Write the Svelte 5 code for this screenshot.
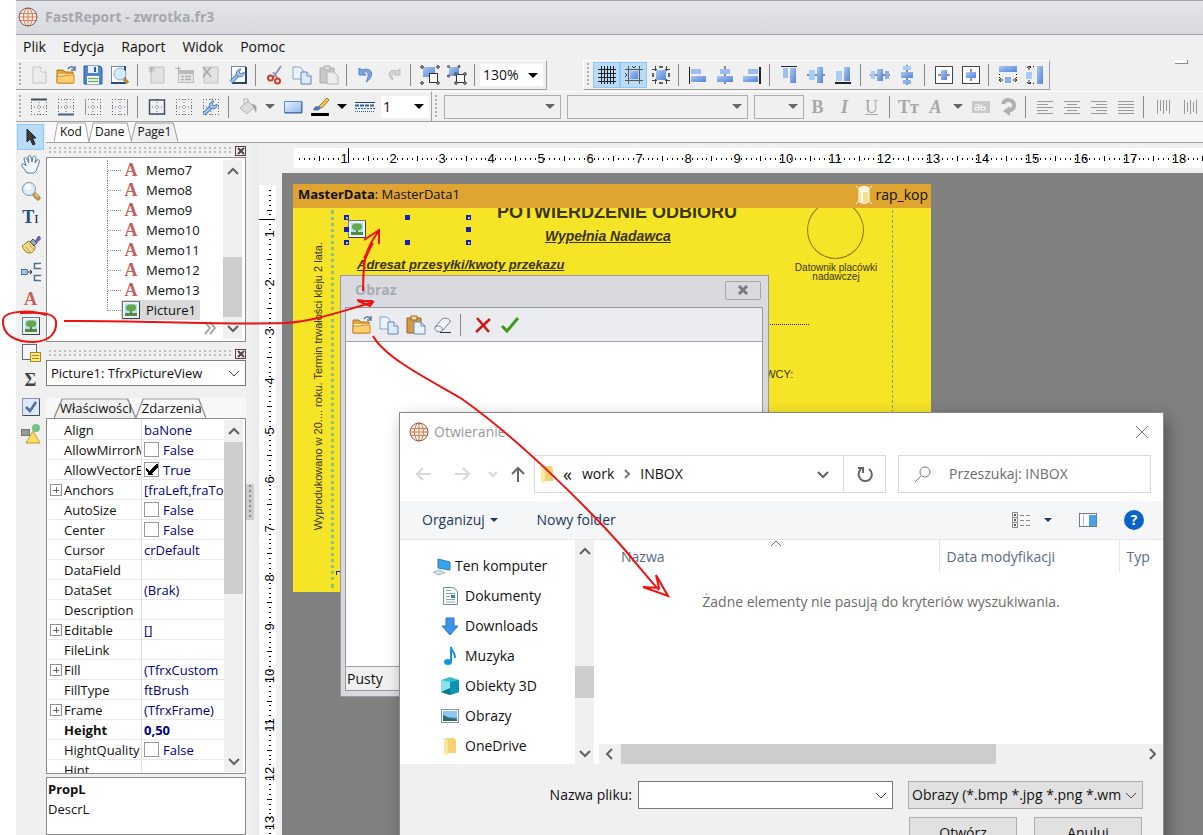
<script lang="ts">
	type Prop = { name: string; value?: string; check?: boolean; expand?: boolean; bold?: boolean };

	let query = $state('');
	let fileName = $state('');
	let activeTool = $state('cursor');

	const menu = ['Plik', 'Edycja', 'Raport', 'Widok', 'Pomoc'];

	// '|' is a separator, 'arrow' is a narrow drop-down button
	const fileBar = [
		'new', 'open', 'save', 'preview', '|', 'newPage', 'newDialog', 'deletePage', 'settings', '|',
		'cut', 'copy', 'paste', '|', 'undo', 'redo', '|', 'group', 'ungroup', '|'
	];
	const alignBar = [
		'grid', 'snap', 'fit', '|', 'alLeft', 'alCenter', 'alRight', '|', 'alTop', 'alMiddle', 'alBottom', '|',
		'spaceH', 'spaceV', '|', 'centerH', 'centerV', '|', 'sameW', 'sameH'
	];
	const frameBar = ['frTop', 'frBottom', 'frLeft', 'frRight', '|', 'frAll', 'frNone', 'frEdit', '|', 'fill', 'arrow', 'rect', 'brush', 'arrowDark', 'lines'];
	const textBar = [
		'bold', 'italic', 'underline', '|', 'font', 'fontColor', 'arrow', 'highlight', 'rotate', '|',
		'txLeft', 'txCenter', 'txRight', 'txJustify', '|', 'vTop', 'vMiddle'
	];
	const pressed = ['grid', 'snap'];
	const toolbox = ['cursor', 'hand', 'zoom', 'textTool', 'format', 'connect', 'memo', 'picture', 'subreport', 'sum', 'checkTool', 'shapes'];

	const tree = ['Memo7', 'Memo8', 'Memo9', 'Memo10', 'Memo11', 'Memo12', 'Memo13', 'Picture1'];

	const props: Prop[] = [
		{ name: 'Align', value: 'baNone' },
		{ name: 'AllowMirrorMode', check: false },
		{ name: 'AllowVectorExport', check: true },
		{ name: 'Anchors', value: '[fraLeft,fraTop]', expand: true },
		{ name: 'AutoSize', check: false },
		{ name: 'Center', check: false },
		{ name: 'Cursor', value: 'crDefault' },
		{ name: 'DataField' },
		{ name: 'DataSet', value: '(Brak)' },
		{ name: 'Description' },
		{ name: 'Editable', value: '[]', expand: true },
		{ name: 'FileLink' },
		{ name: 'Fill', value: '(TfrxCustom', expand: true },
		{ name: 'FillType', value: 'ftBrush' },
		{ name: 'Frame', value: '(TfrxFrame)', expand: true },
		{ name: 'Height', value: '0,50', bold: true },
		{ name: 'HightQuality', check: false },
		{ name: 'Hint' }
	];

	const places = [
		{ name: 'Ten komputer', icon: 'computer', root: true },
		{ name: 'Dokumenty', icon: 'docs' },
		{ name: 'Downloads', icon: 'down' },
		{ name: 'Muzyka', icon: 'music' },
		{ name: 'Obiekty 3D', icon: 'cube' },
		{ name: 'Obrazy', icon: 'images' },
		{ name: 'OneDrive', icon: 'folder' }
	];

	// one centimetre on the rulers at 130% zoom
	const CM = 49.1;
	const ticks = Array.from({ length: 190 }, (_, i) => i + 1);

	const dots = '<path d="M2 2.500H18M2 17.500H18M2.500 2V18M17.500 2V18M10 2V18M2 10H18" stroke="#666" stroke-dasharray="1 2"/>';
	const page = (c: string) => `<path d="M4 2H12L17 7V18H4Z" fill="${c}" stroke="#c4c4c4"/><path d="M12 2V7H17" fill="#fff" stroke="#c4c4c4"/>`;
	const wrench = '<path d="M3 17L10 10" stroke="#5580b8" stroke-width="4"/><path d="M3 17L10 10" stroke="#a5c8ef" stroke-width="2"/><path d="M9 11C7 7 10 4 13 4L11 7L13 9L16 7C17 11 13 13 9 11" fill="#9cc0ea" stroke="#5580b8"/>';
	const folderOpen = '<path d="M1 5H7L9 7H17V18H1Z" fill="#e3a23a" stroke="#b87414"/><path d="M2 9H17V12H2Z" fill="#fff3cf"/><path d="M1 11H8L10 10H18V18H1Z" fill="#ffcf70" stroke="#d08a20"/><path d="M12 4C14 1 17 1 18 4M19 1V5H15" fill="none" stroke="#54789f" stroke-width="1.500"/>';
	const copyPages = '<path d="M1 2H8L11 5V14H1Z" fill="#eaf3ff" stroke="#8ba3c4"/><path d="M9 7H15L19 11V19H9Z" fill="#dcebff" stroke="#6484b4"/><path d="M15 7V11H19" fill="#fff" stroke="#6484b4"/>';
	const photo = '<rect x="1.500" y="1.500" width="17" height="17" fill="#eef2f4" stroke="#6b7a86"/><path d="M2 18.500H18.500V2" fill="none" stroke="#39434d"/><rect x="4" y="4" width="12" height="12" fill="#b5def0"/><path d="M4 16V13H16V16Z" fill="#4a8f42"/><path d="M9 10H11V15H9Z" fill="#6d7440"/><path d="M5 9C4 6 7 4 10 4.500C14 4 16 6 15 9C14 12 6 12 5 9" fill="#62ab4c"/>';
	const globe = '<circle cx="10" cy="10" r="8.500" fill="#fbeee8"/><g fill="none" stroke="#d97b55"><path d="M2 6.500H18M1 10H19M2 13.500H18M10 1V19"/><ellipse cx="10" cy="10" rx="4.500" ry="9"/></g><circle cx="10" cy="10" r="9" fill="none" stroke="#77635f"/>';
	const textLines = (xs: number[][]) => `<path d="${xs.map(([a, b], i) => `M${a} ${4.5 + i * 3}H${b}`).join('')}" stroke="#999"/>`;
	const glass = '<circle cx="8" cy="8" r="6.500" fill="#dcecfb" stroke="#8094a8"/><circle cx="7" cy="6" r="3" fill="#fff"/><path d="M14 14L17 17" stroke="#b8924a" stroke-width="5" stroke-linecap="round"/><path d="M14 13L17 16" stroke="#f0d28a" stroke-width="1.500"/>';

	const icons: Record<string, string> = {
		globe,
		new: page('#ececec'),
		open: folderOpen,
		save: '<path d="M1 1H17L19 3V19H1Z" fill="#4f86cf" stroke="#2c5a9b"/><rect x="5" y="1" width="10" height="7" fill="#e9f1fb"/><rect x="11" y="2" width="2" height="5" fill="#2c5a9b"/><rect x="4" y="11" width="12" height="8" fill="#fff"/><path d="M5 13.500H15M5 16.500H15" stroke="#6dae5f" stroke-width="1.500"/>',
		preview: '<rect x="1.500" y="1.500" width="14" height="16" fill="#fff" stroke="#6c88ad"/><path d="M1 18H15V1" fill="none" stroke="#2d4e7e" stroke-width="2"/><circle cx="10" cy="9" r="6" fill="#d5eafb" stroke="#8faccc"/><path d="M14 14L18 18" stroke="#c28a38" stroke-width="3.500"/>',
		newPage: '<path d="M4 2H17V18H4Z" fill="#e2e2e2" stroke="#c0c0c0"/><path d="M1 4H8M4.500 1V8M2 1.500L7 7M7 1.500L2 7" stroke="#b4b4b4"/>',
		newDialog: '<rect x="4.500" y="5.500" width="15" height="12" fill="#e6e6e6" stroke="#bbb"/><path d="M5 7.500H19" stroke="#bbb" stroke-width="3"/><path d="M7 11.500H10M7 14.500H10M11 11.500H17M11 14.500H17" stroke="#b0b0b0" stroke-width="1.500"/><path d="M1 3.500H7M4.500 1V7" stroke="#b4b4b4"/>',
		deletePage: '<path d="M3 2H17V18H3Z" fill="#e2e2e2" stroke="#c0c0c0"/><path d="M2 2L10 12M10 2L2 12" stroke="#a5a5a5" stroke-width="1.500"/>',
		settings: `<rect x="3.500" y="1.500" width="14" height="16" fill="#fff" stroke="#6c88ad"/><path d="M4 18H18V2" fill="none" stroke="#24456f" stroke-width="2"/>${wrench}`,
		cut: '<path d="M16 1L8 13M8 7L13 14" stroke="#8296b5" stroke-width="1.800"/><g fill="none" stroke="#cf3b2e" stroke-width="2"><circle cx="5.500" cy="13" r="2.500"/><circle cx="12.500" cy="16" r="2.500"/></g>',
		copy: copyPages,
		paste: '<path d="M1 3H15V18H1Z" fill="#c9c9c9" stroke="#aaa"/><path d="M5 1H11V5H5Z" fill="#ddd" stroke="#aaa"/><path d="M8 7H15L19 11V19H8Z" fill="#ececec" stroke="#b5b5b5"/>',
		undo: '<path d="M3 3V10H10L7.500 7.500C12 5 14 10 10 17C18 13 18 1 6 5Z" fill="#7ea6e6" stroke="#5580c8"/>',
		redo: '<path d="M17 4V10H11L13 8C9 7 8 10 10 15C4 12 5 3 14 6Z" fill="#d6d6d6" stroke="#bcbcbc"/>',
		group: '<rect x="3" y="2" width="12" height="10" fill="url(#blue)"/><rect x="9.500" y="8.500" width="8" height="9" fill="#fff" stroke="#333"/><g fill="#ccc" stroke="#333"><circle cx="2" cy="2" r="1.300"/><circle cx="18" cy="2" r="1.300"/><circle cx="2" cy="18" r="1.300"/><circle cx="18" cy="18" r="1.300"/></g>',
		ungroup: '<rect x="2" y="2" width="10" height="9" fill="url(#blue)"/><rect x="9.500" y="9.500" width="8" height="8" fill="#fff" stroke="#333"/><g fill="#ccc" stroke="#333"><circle cx="1.500" cy="1.500" r="1"/><circle cx="12" cy="1.500" r="1"/><circle cx="1.500" cy="11" r="1"/><circle cx="9" cy="9" r="1.300"/><circle cx="18" cy="9" r="1.300"/><circle cx="9" cy="18" r="1.300"/><circle cx="18" cy="18" r="1.300"/></g>',
		grid: '<path d="M4.500 1V19M7.500 1V19M10.500 1V19M13.500 1V19M16.500 1V19M1 4.500H19M1 8.500H19M1 12.500H19M1 16.500H19" stroke="#222"/>',
		snap: '<rect x="6" y="6" width="8" height="8" fill="url(#blue)"/><path d="M4.500 1V19M15.500 1V19M1 4.500H19M1 15.500H19" stroke="#555"/><path d="M1 8L3 10L1 12M8 1L10 3L12 1" fill="none" stroke="#333"/>',
		fit: '<rect x="5" y="5" width="10" height="10" fill="url(#blue)"/><path d="M4.500 1V19M15.500 1V19M1 4.500H19M1 15.500H19" stroke="#444" stroke-dasharray="5 8 5"/><path d="M8 2H12M8 18H12M2 8V12M18 8V12" stroke="#333" stroke-width="1.500"/>',
		alLeft: '<path d="M1.500 2V19" stroke="#222"/><rect x="3" y="4" width="10" height="5" fill="#9dbcf0"/><rect x="3" y="11" width="15" height="6" fill="url(#blue)"/>',
		alCenter: '<path d="M10 1V19" stroke="#222"/><rect x="5" y="4" width="10" height="5" fill="#9dbcf0"/><rect x="2" y="11" width="16" height="6" fill="url(#blue)"/>',
		alRight: '<path d="M18 2V19" stroke="#222" stroke-width="2"/><rect x="6" y="4" width="10" height="5" fill="#9dbcf0"/><rect x="1" y="11" width="15" height="6" fill="url(#blue)"/>',
		alTop: '<path d="M2 1.500H18" stroke="#222"/><rect x="4" y="3" width="5" height="10" fill="#9dc0f2"/><rect x="11" y="3" width="6" height="15" fill="url(#blue)"/>',
		alMiddle: '<path d="M1 10H19" stroke="#222"/><rect x="3" y="5" width="6" height="10" fill="#a6ccf8"/><rect x="11" y="2" width="6" height="16" fill="url(#blue)"/>',
		alBottom: '<path d="M2 18H18" stroke="#222" stroke-width="2"/><rect x="3" y="6" width="6" height="10" fill="#a6ccf8"/><rect x="11" y="2" width="6" height="14" fill="url(#blue)"/>',
		spaceH: '<path d="M0 10H20" stroke="#222"/><rect x="1" y="6" width="4" height="8" fill="#a6ccf8"/><rect x="7" y="4" width="6" height="12" fill="url(#blue)"/><rect x="15" y="6" width="4" height="8" fill="#8cb0ee"/>',
		spaceV: '<path d="M10 0V20" stroke="#222"/><rect x="6" y="1" width="8" height="4" fill="#a6ccf8"/><rect x="4" y="7" width="12" height="6" fill="url(#blue)"/><rect x="6" y="15" width="8" height="4" fill="#8cb0ee"/>',
		centerH: '<rect x="1.500" y="1.500" width="17" height="17" fill="#fff" stroke="#444"/><path d="M4 10H16" stroke="#222"/><rect x="7" y="5" width="6" height="10" fill="url(#blue)"/>',
		centerV: '<rect x="1.500" y="1.500" width="17" height="17" fill="#fff" stroke="#444"/><path d="M10 4V16" stroke="#222"/><rect x="5" y="7" width="10" height="6" fill="url(#blue)"/>',
		sameW: '<rect x="1" y="1" width="18" height="6" fill="url(#blue)"/><path d="M1.500 9V14M18.500 9V14" stroke="#222" stroke-dasharray="1 2"/><rect x="7" y="12" width="6" height="6" fill="#8cb0ee"/><path d="M5 15H1M3 13L1 15L3 17M15 15H19M17 13L19 15L17 17" fill="none" stroke="#333"/>',
		sameH: '<rect x="12" y="1" width="6" height="18" fill="url(#blue)"/><path d="M5 1.500H11M5 18.500H11" stroke="#222" stroke-dasharray="1 2"/><rect x="1" y="7" width="6" height="7" fill="#a6ccf8"/><path d="M4 5V1M2 3L4 1L6 3M4 15V19M2 17L4 19L6 17" fill="none" stroke="#333"/>',
		frTop: `${dots}<path d="M2 2.500H18" stroke="#444c60" stroke-width="2"/>`,
		frBottom: `${dots}<path d="M2 17.500H18" stroke="#42648c" stroke-width="2"/>`,
		frLeft: `${dots}<path d="M2.500 2V18" stroke="#8399b5"/>`,
		frRight: `${dots}<path d="M17.500 2V18" stroke="#8399b5"/>`,
		frAll: `${dots}<rect x="2.500" y="3" width="15" height="14" fill="none" stroke="#42546c" stroke-width="1.500"/>`,
		frNone: dots,
		frEdit: dots + wrench,
		fill: '<path d="M2 11L10 4L16 10L9 17Z" fill="#dcdcdc" stroke="#b4b4b4"/><path d="M6 8V2H10V6" fill="none" stroke="#b4b4b4"/><path d="M14 7C19 7 19 11 18 16L15 10" fill="#a5a5a5"/>',
		rect: '<rect x="1.500" y="4.500" width="17" height="11" fill="url(#soft)" stroke="#5f88bd"/><path d="M2 16H19V5" fill="none" stroke="#39679f"/>',
		brush: '<path d="M9 9L17 1L19 3L12 11Z" fill="#f3c354" stroke="#a87b22"/><path d="M3 13C5 8 8 8 11 11C9 14 6 14 3 13" fill="#4d77b5"/><rect x="1" y="16" width="18" height="3" fill="#000"/>',
		lines: '<path d="M0 5.500H20" stroke="#245"/><path d="M0 8.500H20" stroke="#2e5fa8" stroke-width="2" stroke-dasharray="4 1"/><path d="M0 11.500H20" stroke="#2e5fa8" stroke-dasharray="2 1"/><path d="M0 14.500H20" stroke="#2e5fa8" stroke-dasharray="1 1"/>',
		highlight: '<rect x="1" y="4" width="18" height="12" fill="#c9c9c9"/><path d="M4 8H8V13H4V10.500H8M10 7V13H14V10H10" fill="none" stroke="#fff"/>',
		rotate: '<path d="M5 7C6 1 17 2 16 9C16 12 14 13 10 14" fill="none" stroke="#b0b0b0" stroke-width="4"/><path d="M12 9V19L5 14Z" fill="#b0b0b0"/>',
		txLeft: textLines([[2, 18], [2, 13], [2, 18], [2, 13], [2, 18]]),
		txCenter: textLines([[2, 18], [5, 15], [2, 18], [5, 15], [2, 18]]),
		txRight: textLines([[2, 18], [7, 18], [2, 18], [7, 18], [2, 18]]),
		txJustify: textLines([[2, 18], [2, 18], [2, 18], [2, 18], [2, 18]]),
		vTop: '<path d="M4.500 3V17M7.500 3V14M10.500 3V17M13.500 3V14M16.500 3V17" stroke="#999"/>',
		vMiddle: '<path d="M4.500 3V17M7.500 5V15M10.500 3V17M13.500 5V15M16.500 3V17" stroke="#999"/>',
		cursor: '<path d="M6 2V15L9 12L12 18L14 17L11.500 11H15Z" fill="#3b3b3b" stroke="#222"/>',
		hand: '<path d="M6 19L1 12C0 9 3 9 5 12L3 5C3 3 5 3 6 5L8 9L7 3C7 1 10 1 10 3L11 8L12 3C13 1 15 2 15 4L14 9L16 6C18 5 19 6 18 9L15 17L13 19Z" fill="#f4f8ff" stroke="#5b779b"/>',
		zoom: glass,
		format: '<path d="M1 11C4 10 5 7 8 6L14 11C14 15 12 18 8 18C5 18 3 15 1 11Z" fill="#f0dc8a" stroke="#8c7a2b"/><path d="M5 12L9 17M8 9L12 14" stroke="#c0a040"/><path d="M9 7L12 4L16 8L13 11Z" fill="#9aa6b8" stroke="#556"/><path d="M14 6L17 1H19L20 4L16 8Z" fill="#6b62b4"/>',
		connect: '<rect x="0.500" y="7.500" width="6" height="5" fill="#a8c4e4" stroke="#56779f"/><path d="M7 10H11M9 8L11 10L9 12" fill="none" stroke="#222"/><path d="M20 1.500H13.500V6.500H20M20 13.500H13.500V18.500H20" fill="#fff" stroke="#4b6d98" stroke-width="1.500"/>',
		picture: photo,
		subreport: '<rect x="1.500" y="1.500" width="14" height="15" fill="#f4f6f9" stroke="#5f6b7d"/><rect x="9.500" y="9.500" width="10" height="9" fill="#ffe97f" stroke="#a88a1c"/><path d="M11 12.500H18M11 15.500H18" stroke="#a88a1c"/>',
		checkTool: '<rect x="1.500" y="1.500" width="17" height="17" fill="#dce8f8" stroke="#8a95a4"/><path d="M2 18.500H18.500V2" fill="none" stroke="#444c58"/><path d="M5 10L9 14L15 5" fill="none" stroke="#4f6f9f" stroke-width="2.500"/>',
		shapes: '<rect x="0.500" y="5.500" width="8" height="6" fill="#999" stroke="#777"/><circle cx="15" cy="4" r="4" fill="#6fc383"/><path d="M12 7L19 19H5Z" fill="#ffdb68" stroke="#c99a24"/>',
		pasteColor: '<path d="M1 3H15V18H1Z" fill="#d49a4c" stroke="#966020"/><path d="M5 1H11V5H5Z" fill="#f0dca0" stroke="#966020"/><path d="M8 7H15L19 11V19H8Z" fill="#eaf2fd" stroke="#7088aa"/><path d="M15 7V11H19" fill="none" stroke="#7088aa"/>',
		eraser: '<path d="M2 12L9 4C12 2 18 4 17 7L9 16C6 18 1 16 2 12Z" fill="#f5f8fc" stroke="#6c7c92"/><path d="M2 12C5 10 9 11 10 15" fill="none" stroke="#6c7c92"/><path d="M7 17.500H18" stroke="#334"/>',
		cancel: '<path d="M4 3L16 17M17 4L3 17" stroke="#cf1515" stroke-width="2.500"/>',
		ok: '<path d="M2 11L7 16L18 3" fill="none" stroke="#3f9a1f" stroke-width="3"/>',
		database: '<path d="M5 4V16C5 19 15 19 15 16V4" fill="#f7dc8c" stroke="#fff"/><path d="M8 7V17" stroke="#fff" stroke-width="2"/><ellipse cx="10" cy="4" rx="5" ry="2.500" fill="#fff3c8" stroke="#fff"/><path d="M2 1L5 4M18 1L15 4M2 19L5 16M18 19L15 16" stroke="#fff"/>',
		computer: '<path d="M6 3L18 6V14L6 12Z" fill="#37a5ee" stroke="#2b7cc0"/><path d="M1 16L8 14L13 17L6 19Z" fill="#d4dee6" stroke="#a9bac8"/>',
		docs: '<path d="M3.500 1.500H13L17.500 5V18.500H3.500Z" fill="#fff" stroke="#7d8890"/><path d="M6 4.500H11M6 7.500H15M6 10.500H10M6 13.500H15M6 16H15" stroke="#7ba7c4"/><rect x="11" y="9" width="4" height="3" fill="#3187bd"/>',
		down: '<path d="M6 2H14V10H18L10 19L2 10H6Z" fill="#3c94e6" stroke="#2a77c4"/>',
		music: '<ellipse cx="8" cy="16" rx="4" ry="3" fill="#1593dc"/><path d="M11 16V1C11 6 16 6 15 12" fill="none" stroke="#1593dc" stroke-width="2"/>',
		cube: '<path d="M1 4L10 1L19 4V16L10 19L1 16Z" fill="#39bdd4"/><path d="M1 4L10 6V19L1 16Z" fill="#8be3ea"/><path d="M10 6L19 4V16L10 19Z" fill="#0f93b5"/><path d="M1 16L10 12V19Z" fill="#0d7590"/>',
		images: '<rect x="1.500" y="3.500" width="17" height="13" fill="#fff" stroke="#8b959e"/><rect x="3" y="5" width="14" height="10" fill="#8ec9f5"/><path d="M3 9L10 12L17 13V15H3Z" fill="#2d6b5e"/><path d="M3 12H17" stroke="#3c78a8"/>',
		folder: '<path d="M4 2H14L16 4V17H6L4 18Z" fill="#f6d273"/><path d="M4 2L8 4V19L4 18Z" fill="#ffe7a0"/>'
	};

	const letters: Record<string, [string, string]> = {
		bold: ['B', 'l-bold'],
		italic: ['I', 'l-bold l-italic'],
		underline: ['U', 'l-under'],
		font: ['Tт', 'l-bold'],
		fontColor: ['A', 'l-bold l-italic'],
		textTool: ['T', 'l-navy'],
		memo: ['A', 'l-red'],
		sum: ['Σ', 'l-dark']
	};
</script>

{#snippet icon(name: string)}
	{#if letters[name]}
		<span class="letter {letters[name][1]}">{letters[name][0]}{#if name === 'textTool'}<small>I</small>{/if}</span>
	{:else}
		<svg class="icon" viewBox="0 0 20 20" fill="none" aria-hidden="true">{@html icons[name]}</svg>
	{/if}
{/snippet}

{#snippet chevron(d: string)}
	<svg class="chevron" viewBox="0 0 12 12" aria-hidden="true"><path {d} /></svg>
{/snippet}

{#snippet tools(items: string[])}
	{#each items as item}
		{#if item === '|'}
			<span class="sep"></span>
		{:else if item === 'arrow' || item === 'arrowDark'}
			<button class="tool narrow" class:dark={item === 'arrowDark'} aria-label="Rozwiń"><i class="tri"></i></button>
		{:else}
			<button class="tool" class:on={pressed.includes(item)} aria-label={item}>{@render icon(item)}</button>
		{/if}
	{/each}
{/snippet}

{#snippet tab(label: string, active: boolean)}
	<button class="tab" class:active>
		<svg viewBox="0 0 50 20" preserveAspectRatio="none" aria-hidden="true"><path d="M0 20L5 1H45L50 20" /></svg>
		<span>{label}</span>
	</button>
{/snippet}

{#snippet ruler(vertical: boolean)}
	<svg class="scale" aria-hidden="true">
		<g transform={vertical ? 'rotate(-90) scale(-1 1)' : ''}>
			{#each ticks as t}
				{#if t % 10 === 5}
					<rect x={Math.round((t * CM) / 10)} y="8" width="1" height="5" />
				{:else if t % 10 !== 0}
					<rect x={Math.round((t * CM) / 10)} y="10" width="1" height="2" />
				{/if}
			{/each}
		</g>
		{#each ticks.filter((t) => t % 10 === 0) as t}
			{#if vertical}
				<text transform="translate(15 {Math.round((t * CM) / 10)}) rotate(-90)">{t / 10}</text>
			{:else}
				<text x={Math.round((t * CM) / 10) + 1} y="15">{t / 10}</text>
			{/if}
		{/each}
	</svg>
{/snippet}

<svg class="defs" aria-hidden="true">
	<defs>
		<linearGradient id="blue" x1="0" y1="0" x2="1" y2="1">
			<stop offset="0" stop-color="#a9c8f4" /><stop offset="1" stop-color="#5583d8" />
		</linearGradient>
		<linearGradient id="soft" x1="0" y1="0" x2="1" y2="1">
			<stop offset="0" stop-color="#eaf3ff" /><stop offset="1" stop-color="#8fb8ee" />
		</linearGradient>
	</defs>
</svg>

<div class="app">
	<header class="title">{@render icon('globe')}<span>FastReport - zwrotka.fr3</span></header>

	<nav class="menu">
		{#each menu as item}<button>{item}</button>{/each}
		<button class="mdi" aria-label="Minimalizuj"></button>
	</nav>

	<div class="bars">
		<div class="bar">
			<i class="grip"></i>
			{@render tools(fileBar)}
			<label class="combo zoom">
				<select aria-label="Powiększenie"><option>130%</option></select><i class="tri"></i>
			</label>
		</div>
		<div class="bar second">
			<i class="grip"></i>
			{@render tools(alignBar)}
		</div>
	</div>

	<div class="bars lower">
		<div class="bar">
			<i class="grip"></i>
			{@render tools(frameBar)}
			<label class="combo thick">
				<select aria-label="Grubość linii"><option>1</option></select><i class="tri"></i>
			</label>
		</div>
		<div class="bar text">
			<i class="grip"></i>
			<label class="combo off style"><select disabled aria-label="Styl"></select><i class="tri"></i></label>
			<label class="combo off face"><select disabled aria-label="Czcionka"></select><i class="tri"></i></label>
			<label class="combo off size"><select disabled aria-label="Rozmiar"></select><i class="tri"></i></label>
			{@render tools(textBar)}
		</div>
	</div>

	<div class="main">
		<div class="toolbox">
			{#each toolbox as item}
				<button class="tool" class:on={activeTool === item} aria-label={item} onclick={() => (activeTool = item)}>
					{@render icon(item)}
				</button>
			{/each}
		</div>

		<div class="content">
			<div class="tabs top">
				{@render tab('Kod', false)}
				{@render tab('Dane', false)}
				{@render tab('Page1', true)}
			</div>

			<div class="columns">
				<aside class="side">
					<div class="dock"><i></i><button aria-label="Zamknij"><svg viewBox="0 0 8 8"><path d="M1 1L7 7M7 1L1 7" /></svg></button></div>
					<div class="tree">
						<ul>
							{#each tree as node}
								<li>
									<i class="branch"></i>
									<span class="node" class:selected={node === 'Picture1'}>
										{@render icon(node === 'Picture1' ? 'picture' : 'memo')}
										<b>{node}</b>
									</span>
								</li>
							{/each}
						</ul>
						<svg class="more" viewBox="0 0 12 14" aria-hidden="true"><path d="M1 1L6 7L1 13M6 1L11 7L6 13" /></svg>
						<div class="vbar tree-bar">
							<button aria-label="W górę">{@render chevron('M1 9L6 4L11 9')}</button>
							<i></i>
							<button aria-label="W dół">{@render chevron('M1 4L6 9L11 4')}</button>
						</div>
					</div>

					<div class="dock"><i></i><button aria-label="Zamknij"><svg viewBox="0 0 8 8"><path d="M1 1L7 7M7 1L1 7" /></svg></button></div>
					<label class="combo object">
						<select aria-label="Obiekt"><option>Picture1: TfrxPictureView</option></select>
						{@render chevron('M1 4L6 9L11 4')}
					</label>

					<div class="tabs">
						{@render tab('Właściwości', true)}
						{@render tab('Zdarzenia', false)}
					</div>
					<div class="inspector">
						<table>
							<tbody>
								{#each props as p}
									<tr class:strong={p.bold}>
										<th><span class="cell">{#if p.expand}<i class="plus"></i>{/if}{p.name}</span></th>
										<td>
											<span class="cell">
												{#if p.check !== undefined}
													<label><input type="checkbox" checked={p.check} />{p.check ? 'True' : 'False'}</label>
												{:else}
													{p.value ?? ''}
												{/if}
											</span>
										</td>
									</tr>
								{/each}
							</tbody>
						</table>
						<div class="vbar prop-bar">
							<button aria-label="W górę">{@render chevron('M1 9L6 4L11 9')}</button>
							<i></i>
							<button aria-label="W dół">{@render chevron('M1 4L6 9L11 4')}</button>
						</div>
					</div>
					<div class="hint"><b>PropL</b><p>DescrL</p></div>
				</aside>

				<div class="splitter"><i></i></div>

				<section class="work">
					<div class="hruler">{@render ruler(false)}<i class="mark"></i></div>
					<div class="lower-work">
						<div class="vruler">{@render ruler(true)}<i class="mark"></i></div>
						<div class="desk">
							<div class="sheet">
								<div class="band">
									<b>MasterData</b>: MasterData1
									<span class="source">{@render icon('database')}rap_kop</span>
								</div>
								<div class="form">
									<p class="stamp-note">Wyprodukowano w 20.... roku. Termin trwałości kleju 2 lata.</p>
									<h1>POTWIERDZENIE ODBIORU</h1>
									<h2>Wypełnia Nadawca</h2>
									<h3>Adresat przesyłki/kwoty przekazu</h3>
									<i class="stamp"></i>
									<p class="stamp-label">Datownik placówki nadawczej</p>
									<i class="dotted"></i>
									<p class="sender">NADAWCY:</p>
									<i class="fold left"></i>
									<i class="fold right"></i>
									<i class="corner"></i>
									<div class="picked">
										{@render icon('picture')}
										<svg viewBox="0 0 128 32" aria-hidden="true">
											{#each [0, 61, 122] as x}
												{#each [0, 12, 25] as y}
													{#if x !== 61 || y !== 12}<rect {x} {y} width="5" height="5" />{/if}
													{#if x !== 61 && y !== 12}<circle cx={x + 3} cy={y + 3} r="1" />{/if}
												{/each}
											{/each}
										</svg>
									</div>
								</div>
							</div>
						</div>
					</div>
				</section>
			</div>
		</div>
	</div>

	<section class="window" aria-label="Obraz">
		<header><span>Obraz</span><button aria-label="Zamknij"><svg viewBox="0 0 12 10"><path d="M2 1L10 9M10 1L2 9" /></svg></button></header>
		<div class="inner">
			<div class="image-tools">{@render tools(['open', 'copy', 'pasteColor', 'eraser', '|', 'cancel', 'ok'])}</div>
			<div class="canvas"></div>
			<footer>Pusty</footer>
		</div>
	</section>

	<section class="dialog" aria-label="Otwieranie">
		<header>
			{@render icon('globe')}<span>Otwieranie</span>
			<button aria-label="Zamknij"><svg viewBox="0 0 12 12"><path d="M0 0L12 12M12 0L0 12" /></svg></button>
		</header>
		<div class="address">
			<div class="nav">
				<button aria-label="Wstecz"><svg viewBox="0 0 16 16"><path d="M15 8H1M7 2L1 8L7 14" /></svg></button>
				<button aria-label="Dalej"><svg viewBox="0 0 16 16"><path d="M1 8H15M9 2L15 8L9 14" /></svg></button>
				<button class="small" aria-label="Ostatnie"><svg viewBox="0 0 16 16"><path d="M4 6L8 10L12 6" /></svg></button>
				<button class="up" aria-label="W górę"><svg viewBox="0 0 16 16"><path d="M8 16V2M2 8L8 2L14 8" /></svg></button>
			</div>
			<div class="path">
				{@render icon('folder')}
				<span class="quot">«</span>
				<a href="#work">work</a>
				<svg class="crumb" viewBox="0 0 8 10"><path d="M2 1L6 5L2 9" /></svg>
				<a href="#inbox">INBOX</a>
				<button class="drop" aria-label="Poprzednie lokalizacje">{@render chevron('M1 4L6 9L11 4')}</button>
				<button class="refresh" aria-label="Odśwież"><svg viewBox="0 0 16 16"><path d="M4 3C-1 8 3 15 8 15C15 15 17 7 12 3M1 2H6V7" /></svg></button>
			</div>
			<label class="search">
				<svg viewBox="0 0 16 16"><circle cx="10" cy="6" r="5" /><path d="M6 10L0 16" /></svg>
				<input bind:value={query} placeholder="Przeszukaj: INBOX" aria-label="Przeszukaj" />
			</label>
		</div>
		<div class="commands">
			<button>Organizuj <i class="tri"></i></button>
			<button>Nowy folder</button>
			<span class="views">
				<button aria-label="Widok">
					<svg class="list-icon" viewBox="0 0 18 16"><path d="M0.500 0.500H5.500V15.500H0.500ZM0 5.500H6M0 10.500H6M8 3.500H12M14 3.500H18M8 8.500H12M14 8.500H18M8 13.500H12M14 13.500H18" stroke="#888" fill="none" /><path d="M2 2H4V4H2ZM2 7H4V9H2ZM2 12H4V14H2Z" fill="#555" /></svg>
				</button>
				<button aria-label="Więcej opcji"><i class="tri"></i></button>
				<button aria-label="Podgląd">
					<svg class="list-icon" viewBox="0 0 18 14"><rect x="0.500" y="0.500" width="17" height="13" fill="#fff" stroke="#778" /><path d="M4.500 1V13" stroke="#bbb" /><rect x="10" y="2" width="7" height="11" fill="#46a0e8" /></svg>
				</button>
				<button class="help">?</button>
			</span>
		</div>
		<div class="browser">
			<ul class="places">
				{#each places as place}
					<li class:root={place.root}>{@render icon(place.icon)}{place.name}</li>
				{/each}
			</ul>
			<div class="vbar place-bar">
				<button aria-label="W górę">{@render chevron('M1 9L6 4L11 9')}</button>
				<i></i>
				<button aria-label="W dół">{@render chevron('M1 4L6 9L11 4')}</button>
			</div>
			<div class="files">
				<span class="sort">{@render chevron('M1 9L6 4L11 9')}</span>
				<table>
					<thead>
						<tr><th>Nazwa</th><th>Data modyfikacji</th><th>Typ</th></tr>
					</thead>
				</table>
				<p>Żadne elementy nie pasują do kryteriów wyszukiwania.</p>
				<div class="hbar">
					<button aria-label="W lewo">{@render chevron('M8 1L3 6L8 11')}</button>
					<i></i>
					<button aria-label="W prawo">{@render chevron('M4 1L9 6L4 11')}</button>
				</div>
			</div>
		</div>
		<div class="choose">
			<label for="file-name">Nazwa pliku:</label>
			<span class="combo name"><input id="file-name" bind:value={fileName} />{@render chevron('M1 4L6 9L11 4')}</span>
			<label class="combo type">
				<select aria-label="Typ pliku"><option>Obrazy (*.bmp *.jpg *.png *.wm</option></select>
				{@render chevron('M1 4L6 9L11 4')}
			</label>
			<div class="actions"><button>Otwórz</button><button>Anuluj</button></div>
		</div>
	</section>

	<!-- hand-drawn arrows over the whole window -->
	<svg class="marker" aria-hidden="true">
		<path d="M46 315C30 309 4 311 3 320C2 335 15 342 34 342C50 341 57 333 56 321C54 313 42 312 20 313" />
		<path d="M64 321C130 320 220 325 285 323C315 321 342 311 371 303M357 300L373 302L370 306L358 301L373 301" />
		<path d="M363 291C364 270 361 255 378 232M364 240L379 230L379 244M364 258L373 243M363 264L371 246" />
		<path d="M373 336C385 358 430 380 462 399C520 440 590 510 625 550C640 568 648 578 659 590M643 587L668 596L656 575L659 588Z" />
	</svg>
</div>

<style>
	:global(body) {
		margin: 0;
		background: #fff;
	}

	.app {
		position: relative;
		display: flex;
		flex-direction: column;
		box-sizing: border-box;
		height: 100vh;
		padding-left: 16px;
		overflow: hidden;
		font-family: 'Open Sans', 'Noto Sans', sans-serif;
		font-size: 13px;
		line-height: 20px;
		color: #111;
	}

	.app * {
		box-sizing: border-box;
	}

	.defs {
		position: absolute;
		width: 0;
		height: 0;
	}

	button,
	select,
	input {
		margin: 0;
		padding: 0;
		border: 0;
		background: none;
		border-radius: 0;
		font: inherit;
		color: inherit;
	}

	ul,
	p,
	h1,
	h2,
	h3 {
		margin: 0;
		padding: 0;
		list-style: none;
	}

	select {
		appearance: none;
		opacity: 1;
	}

	.icon {
		display: block;
		flex: none;
		width: 20px;
		height: 20px;
	}

	.chevron {
		width: 12px;
		height: 12px;
		flex: none;
		fill: none;
		stroke: #606060;
		stroke-width: 2;
	}

	.tri {
		flex: none;
		width: 0;
		border: 5px solid transparent;
		border-top-color: #000;
		border-bottom: 0;
	}

	.title {
		display: flex;
		flex: none;
		align-items: center;
		gap: 7px;
		height: 35px;
		padding: 0 0 1px 2px;
		border-top: 1px solid #a5a6ab;
		border-bottom: 1px solid #9fa0a5;
		background: linear-gradient(#e4e5ea, #d7d9df);
		font-size: 14px;
		font-weight: bold;
		color: #a5a7ae;
	}

	.menu {
		position: relative;
		display: flex;
		flex: none;
		gap: 17px;
		height: 25px;
		padding: 0 0 2px 7px;
		background: #f0f0f0;
		font-size: 14px;
	}

	.menu .mdi {
		position: absolute;
		right: 15px;
		bottom: -4px;
		width: 13px;
		height: 4px;
		background: #fff;
		border-bottom: 1px solid #888;
		border-right: 1px solid #888;
		z-index: 1;
	}

	.bars {
		display: flex;
		flex: none;
		gap: 36px;
		height: 31px;
		background: #f0f0f0;
	}

	.bars.lower {
		gap: 0;
		border-bottom: 1px solid #a0a0a0;
	}

	.bar {
		display: flex;
		flex: none;
		align-items: center;
		height: 30px;
		padding-left: 2px;
		border-right: 1px solid #a0a0a0;
		border-bottom: 1px solid #a0a0a0;
		border-top: 1px solid #fff;
	}

	.bars.lower .bar {
		border-bottom: 0;
	}

	.second {
		padding-right: 1px;
		border-left: 1px solid #fff;
	}

	.text {
		border-right: 0;
	}

	.grip {
		flex: none;
		width: 4px;
		height: 24px;
		margin-right: 3px;
		background: linear-gradient(#bbb, #bbb) 1px 1px / 2px 2px no-repeat;
		background: conic-gradient(from 0deg at 2px 2px, transparent 75%, #b0b0b0 0) 1px 0 / 4px 4px;
	}

	.tool {
		display: flex;
		flex: none;
		align-items: center;
		justify-content: center;
		width: 27px;
		height: 26px;
	}

	.tool.narrow {
		width: 18px;
	}

	.tool .tri {
		border-top-color: #666;
	}

	.tool.dark .tri {
		border-top-color: #000;
	}

	.tool.on {
		background: #b9dbf5;
		border: 1px solid #90c8f6;
	}

	.sep {
		flex: none;
		width: 1px;
		height: 22px;
		margin: 0 5px 0 4px;
		background: #888;
	}

	.letter {
		font-family: 'Liberation Serif', serif;
		font-size: 18px;
		line-height: 20px;
		color: #a8a8a8;
	}

	.l-bold {
		font-weight: bold;
	}

	.l-italic {
		font-style: italic;
	}

	.l-under {
		text-decoration: underline;
	}

	.l-navy {
		font-weight: bold;
		color: #1f4e87;
	}

	.l-navy small {
		font-size: 13px;
		font-weight: normal;
		color: #222;
	}

	.l-red {
		font-weight: bold;
		color: #c4615e;
	}

	.l-dark {
		font-weight: bold;
		color: #444;
	}

	/* drop-downs: the arrow shares the grid cell with the field */
	.combo {
		display: grid;
		flex: none;
		align-items: center;
		height: 24px;
		background: #fff;
	}

	.combo > * {
		grid-area: 1 / 1;
	}

	.combo > select,
	.combo > input {
		width: 100%;
		height: 100%;
	}

	.combo > .tri,
	.combo > .chevron {
		justify-self: end;
		margin-right: 5px;
		pointer-events: none;
	}

	.combo > .chevron {
		stroke: #444;
		stroke-width: 1;
	}

	.zoom {
		width: 63px;
		height: 22px;
		margin-right: 3px;
		font-size: 14px;
	}

	.zoom select {
		padding-left: 3px;
	}

	.thick {
		width: 48px;
		height: 22px;
		margin: 0 2px 0 3px;
		font-size: 14px;
	}

	.thick select {
		padding-left: 2px;
	}

	.off {
		margin-right: 6px;
		border: 1px solid #adadad;
		background: #f0f0f0;
	}

	.off .tri {
		border-top-color: #666;
	}

	.style {
		width: 117px;
		margin-left: 3px;
	}

	.face {
		width: 181px;
	}

	.size {
		width: 50px;
		margin-right: 0;
	}

	.main {
		display: flex;
		flex: 1;
		min-height: 0;
	}

	.toolbox {
		display: flex;
		flex: none;
		flex-direction: column;
		gap: 1px;
		width: 30px;
		padding: 2px 1px;
		background: #f0f0f0;
	}

	.content {
		display: flex;
		flex: 1;
		flex-direction: column;
		min-width: 0;
	}

	.tabs {
		display: flex;
		flex: none;
		height: 20px;
		padding-left: 8px;
		background: #f8f8f8;
	}

	.tabs.top {
		height: 21px;
		border-bottom: 1px solid #a0a0a0;
	}

	.tab {
		display: grid;
		height: 20px;
	}

	.tab > * {
		grid-area: 1 / 1;
	}

	.tab span {
		z-index: 1;
		padding: 0 7px 0 6px;
		font-size: 12px;
	}

	.side .tab span {
		padding: 0 4px 0 6px;
		font-size: 13px;
	}

	.tab svg {
		width: 0;
		min-width: 100%;
		height: 20px;
		fill: #fff;
		stroke: #999;
	}

	.tab.active svg {
		fill: #f0f0f0;
	}

	.columns {
		display: flex;
		flex: 1;
		min-height: 0;
		background: #f0f0f0;
	}

	.side {
		display: flex;
		flex: none;
		flex-direction: column;
		width: 200px;
	}

	.dock {
		display: flex;
		flex: none;
		align-items: center;
		gap: 2px;
		height: 14px;
		padding: 2px 0 0 3px;
	}

	.dock i {
		flex: 1;
		height: 8px;
		background: conic-gradient(from 0deg at 2px 2px, transparent 75%, #bdbdbd 0) 0 0 / 5px 4px;
	}

	.dock button {
		display: grid;
		place-items: center;
		width: 11px;
		height: 10px;
		border: 1px solid #58424a;
	}

	.dock svg {
		width: 8px;
		height: 8px;
		stroke: #58424a;
		stroke-width: 2;
	}

	.tree {
		position: relative;
		display: flex;
		flex: none;
		justify-content: space-between;
		height: 185px;
		margin-bottom: 4px;
		padding: 2px 3px 2px 2px;
		border: 1px solid #8d8d8d;
		background: #fff;
	}

	.tree ul {
		padding-left: 58px;
	}

	.tree li {
		display: flex;
		border-left: 1px dotted #888;
	}

	.tree li:last-child {
		height: 11px;
	}

	.branch {
		width: 13px;
		height: 11px;
		border-bottom: 1px dotted #888;
	}

	.node {
		display: flex;
		height: 20px;
		gap: 5px;
		padding-right: 4px;
	}

	.node b {
		font-weight: normal;
	}

	.node .letter {
		width: 20px;
		text-align: center;
	}

	.node.selected {
		background: #d9d9d9;
	}

	.more {
		position: absolute;
		right: 29px;
		bottom: 6px;
		width: 12px;
		height: 14px;
		fill: none;
		stroke: #aaa;
		stroke-width: 2;
	}

	.vbar {
		display: flex;
		flex: none;
		flex-direction: column;
		width: 19px;
		background: #f0f0f0;
	}

	.vbar button {
		display: grid;
		place-items: center;
		height: 22px;
	}

	.vbar i {
		background: #cdcdcd;
	}

	.vbar button:last-child {
		margin-top: auto;
	}

	.tree-bar i {
		height: 62px;
		margin-top: 75px;
	}

	.prop-bar i {
		height: 152px;
	}

	.place-bar i {
		height: 32px;
		margin-top: 104px;
	}

	.object {
		height: 26px;
		margin-bottom: 12px;
		border: 1px solid #7a7a7a;
	}

	.object select {
		padding-left: 4px;
	}

	.inspector {
		display: flex;
		flex: none;
		height: 356px;
		padding: 1px 2px 1px 1px;
		border: 1px solid #8d8d8d;
		background: #fff;
		overflow: hidden;
	}

	.inspector table {
		display: block;
		flex: 1;
		width: 176px;
	}

	.inspector tbody {
		display: block;
	}

	.inspector tr {
		display: flex;
		height: 20px;
		border-bottom: 1px solid #e8e8e8;
	}

	.inspector th {
		width: 94px;
		padding: 0 0 0 16px;
		border-right: 1px solid #e0e0e0;
		font-weight: normal;
		text-align: left;
		overflow: clip;
	}

	.inspector td {
		flex: 1;
		width: 82px;
		padding: 0 0 0 2px;
		color: #000080;
		overflow: hidden;
	}

	.cell {
		position: relative;
		display: block;
		height: 19px;
		white-space: nowrap;
	}

	.cell label {
		display: flex;
		gap: 4px;
	}

	.inspector .strong th,
	.inspector .strong td {
		font-weight: bold;
	}

	.plus {
		position: absolute;
		left: -14px;
		top: 4px;
		width: 12px;
		height: 12px;
		border: 1px solid #909090;
		background: linear-gradient(#666, #666) center / 6px 1px no-repeat, linear-gradient(#666, #666) center / 1px 6px no-repeat;
	}

	.cell input {
		appearance: none;
		width: 15px;
		height: 15px;
		margin-top: 2px;
		border: 1px solid #999;
		background: #fff;
	}

	.cell input:checked {
		background: linear-gradient(45deg, transparent 0 30%, #000 30% 48%, transparent 48%) 1px 4px / 7px 8px no-repeat,
			linear-gradient(135deg, transparent 40%, #000 40% 62%, transparent 62%) 3px 1px / 10px 11px no-repeat;
	}

	.hint {
		flex: 1;
		margin-top: 3px;
		padding: 1px;
		border: 1px solid #8d8d8d;
		background: #fff;
	}

	.splitter {
		display: flex;
		flex: none;
		align-items: flex-start;
		width: 13px;
		background: linear-gradient(90deg, #f0f0f0, #e8eaee);
	}

	.splitter i {
		width: 8px;
		height: 36px;
		margin-top: 341px;
		background: conic-gradient(from 0deg at 2px 2px, transparent 75%, #888 0) 3px 1px / 8px 5px, #ccc;
	}

	.work {
		display: flex;
		flex: 1;
		flex-direction: column;
		min-width: 0;
		padding-top: 5px;
	}

	.hruler {
		position: relative;
		flex: none;
		height: 20px;
		margin-left: 35px;
		background: #fff;
	}

	.lower-work {
		display: flex;
		flex: 1;
		gap: 6px;
		min-height: 0;
	}

	.vruler {
		position: relative;
		flex: none;
		width: 17px;
		margin-top: 17px;
		background: #fff;
	}

	.scale {
		display: block;
		width: 100%;
		height: 100%;
		font: 13px 'Liberation Sans', sans-serif;
		text-anchor: middle;
	}

	.mark {
		position: absolute;
		left: 54px;
		top: 0;
		width: 1px;
		height: 15px;
		background: #000;
	}

	.vruler .mark {
		left: 0;
		top: 34px;
		width: 16px;
		height: 1px;
	}

	.desk {
		flex: 1;
		margin-top: 5px;
		padding: 11px;
		background: #808080;
		overflow: hidden;
	}

	.sheet {
		width: 638px;
		background: #f6e426;
	}

	.band {
		display: flex;
		height: 24px;
		padding: 0 3px 0 5px;
		background: #dfa530;
		white-space: pre;
	}

	.source {
		display: flex;
		gap: 1px;
		margin-left: auto;
		padding-top: 1px;
		font-size: 14px;
	}

	/* the form itself is a free canvas */
	.form {
		position: relative;
		height: 384px;
		overflow: hidden;
		font-family: 'Liberation Sans', sans-serif;
		color: #3c3410;
	}

	.form > * {
		position: absolute;
		white-space: nowrap;
	}

	.form h1 {
		left: 204px;
		top: -6px;
		font-size: 18px;
	}

	.form h2 {
		left: 252px;
		top: 18px;
		font-size: 14px;
		font-style: italic;
		text-decoration: underline;
	}

	.form h3 {
		left: 64px;
		top: 47px;
		font-size: 13px;
		font-style: italic;
		text-decoration: underline;
	}

	.stamp-note {
		left: 15px;
		top: 34px;
		font-size: 11px;
		writing-mode: vertical-rl;
		transform: rotate(180deg);
	}

	.stamp {
		left: 514px;
		top: -7px;
		width: 57px;
		height: 58px;
		border: 1px solid #867a1c;
		border-radius: 50%;
	}

	.form .stamp-label {
		left: 498px;
		top: 55px;
		width: 90px;
		font-size: 10px;
		line-height: 9px;
		text-align: center;
		white-space: normal;
	}

	.dotted {
		left: 470px;
		top: 116px;
		width: 46px;
		border-top: 1px dotted #2d280c;
	}

	.sender {
		left: 442px;
		top: 156px;
		font-size: 11px;
	}

	.fold {
		top: 2px;
		bottom: 4px;
		border-left: 1px dashed #6fa87d;
	}

	.fold.left {
		left: 38px;
		border-left: 3px dotted #8fc07f;
	}

	.fold.right {
		left: 599px;
	}

	.corner {
		left: 43px;
		top: 363px;
		width: 4px;
		height: 4px;
		border-left: 1px solid #222;
		border-top: 1px solid #222;
	}

	.picked {
		left: 51px;
		top: 7px;
		width: 128px;
		height: 32px;
	}

	.picked .icon {
		margin: 4px 0 0 3px;
	}

	.picked svg:last-child {
		position: absolute;
		inset: 0;
		fill: #1420b8;
	}

	.picked circle {
		fill: #fff;
	}

	.window {
		position: absolute;
		left: 340px;
		top: 275px;
		width: 429px;
		padding: 0 5px 5px 4px;
		border: 1px solid #9698a2;
		background: #d8dae0;
	}

	.window header {
		display: flex;
		align-items: center;
		justify-content: space-between;
		height: 31px;
		padding: 0 2px 3px 10px;
		font-size: 14px;
		font-weight: bold;
		color: #a9abb3;
	}

	.window header button {
		width: 36px;
		height: 19px;
		border: 1px solid #a5a7ae;
		border-radius: 2px;
		line-height: 0;
	}

	.window header svg {
		width: 12px;
		height: 10px;
		stroke: #777a82;
		stroke-width: 3;
	}

	.inner {
		border: 1px solid #9698a2;
		background: #f0f0f0;
	}

	.image-tools {
		display: flex;
		align-items: center;
		height: 33px;
		padding-left: 2px;
		background: #ebecef;
	}

	.image-tools .sep {
		margin: 0 8px 0 4px;
	}

	.canvas {
		height: 326px;
		border: 1px solid #a0a0a0;
		border-width: 1px 0;
		background: #fff;
	}

	.window footer {
		height: 23px;
		padding: 2px 1px;
		font-size: 14px;
	}

	.dialog {
		position: absolute;
		left: 400px;
		top: 413px;
		width: 763px;
		background: #fff;
		box-shadow: 0 0 0 1px #8a8a8a, 4px 6px 16px rgba(0, 0, 0, 0.4);
		font-size: 14px;
	}

	.dialog header {
		display: flex;
		align-items: center;
		gap: 5px;
		height: 37px;
		padding: 0 15px 0 9px;
		color: #999;
	}

	.dialog header button {
		margin-left: auto;
		line-height: 0;
	}

	.dialog header button svg {
		width: 12px;
		height: 12px;
		stroke: #777;
	}

	.address {
		display: flex;
		height: 51px;
		padding: 5px 12px 8px 12px;
	}

	.nav {
		display: flex;
		align-items: center;
		gap: 15px;
		width: 122px;
		padding-left: 4px;
	}

	.nav svg,
	.refresh svg,
	.search svg {
		display: block;
		width: 16px;
		height: 16px;
		fill: none;
		stroke: #d8d8d8;
		stroke-width: 2;
	}

	.nav button + button {
		margin-left: 7px;
	}

	.nav .small {
		margin-left: 0;
	}

	.nav .small + .up {
		margin-left: -6px;
	}

	.nav .up svg {
		stroke: #666;
	}

	.path {
		display: flex;
		flex: 1;
		align-items: center;
		margin-right: 12px;
		padding-left: 2px;
		border: 1px solid #d9d9d9;
	}

	.path a {
		color: #111;
		text-decoration: none;
	}

	.quot {
		margin: 0 10px 0 6px;
		font-size: 18px;
	}

	.crumb {
		width: 8px;
		height: 10px;
		margin: 0 9px;
		fill: none;
		stroke: #777;
		stroke-width: 2;
	}

	.drop {
		margin: 0 14px 0 auto;
		line-height: 0;
	}

	.refresh {
		display: grid;
		place-items: center;
		align-self: stretch;
		width: 42px;
		border-left: 1px solid #d9d9d9;
	}

	.refresh svg {
		stroke: #666;
	}

	.search {
		display: flex;
		align-items: center;
		gap: 18px;
		width: 253px;
		padding-left: 16px;
		border: 1px solid #d9d9d9;
	}

	.search svg {
		stroke: #777;
		stroke-width: 1;
	}

	.search input::placeholder {
		color: #6d6d6d;
		opacity: 1;
	}

	.commands {
		display: flex;
		align-items: center;
		gap: 38px;
		height: 39px;
		padding: 0 19px 0 22px;
		border-bottom: 1px solid #e3e6ea;
		background: #f4f6f8;
		color: #1e395b;
	}

	.commands .tri {
		display: inline-block;
		margin: 0 0 3px 2px;
		border-width: 4px;
		border-bottom: 0;
		border-top-color: #1e395b;
	}

	.views {
		display: flex;
		align-items: center;
		gap: 12px;
		margin-left: auto;
	}

	.views button:nth-child(3) {
		margin: 0 15px;
	}

	.list-icon {
		display: block;
		width: 18px;
		height: 16px;
	}

	.help {
		width: 20px;
		height: 20px;
		border-radius: 50%;
		background: #0a63c4;
		color: #fff;
		font-weight: bold;
		line-height: 20px;
	}

	.browser {
		display: flex;
		height: 224px;
	}

	.places {
		width: 175px;
		padding-top: 11px;
	}

	.places li {
		display: flex;
		align-items: center;
		gap: 5px;
		height: 30px;
		padding-left: 40px;
	}

	.places li.root {
		gap: 3px;
		padding-left: 32px;
	}

	.files {
		position: relative;
		display: flex;
		flex: 1;
		flex-direction: column;
		margin-left: 5px;
		color: #6d6d6d;
	}

	.files table {
		border-collapse: collapse;
		table-layout: fixed;
		width: 100%;
	}

	.files th {
		height: 32px;
		padding: 2px 0 0 7px;
		border-right: 1px solid #e3e6ea;
		font-weight: normal;
		text-align: left;
		color: #5a6b85;
	}

	.files th:first-child {
		width: 340px;
		padding-left: 22px;
	}

	.files th:nth-child(2) {
		width: 180px;
	}

	.files th:last-child {
		border-right: 0;
	}

	.sort {
		position: absolute;
		left: 171px;
		top: -3px;
		line-height: 0;
	}

	.sort .chevron {
		stroke-width: 1;
	}

	.files p {
		margin-top: 20px;
		text-align: center;
	}

	.hbar {
		display: flex;
		height: 20px;
		margin-top: auto;
		background: #f0f0f0;
	}

	.hbar button {
		display: grid;
		place-items: center;
		width: 22px;
	}

	.hbar i {
		width: 375px;
		background: #cdcdcd;
	}

	.hbar button:last-child {
		margin-left: auto;
	}

	.choose {
		display: grid;
		grid-template-columns: 1fr 255px 235px;
		align-items: center;
		gap: 8px 15px;
		padding: 17px 20px 14px;
		background: #f0f0f0;
	}

	.choose > label:first-child {
		margin-right: -9px;
		text-align: right;
	}

	.choose .combo {
		height: 28px;
		border: 1px solid #7a7a7a;
	}

	.choose .type {
		border-color: #adadad;
		background: #e1e1e1;
	}

	.type select {
		padding-left: 3px;
	}

	.actions {
		display: grid;
		grid-column: 3;
		grid-template-columns: 1fr 1fr;
		gap: 17px;
		padding: 0 1px;
	}

	.actions button {
		height: 31px;
		border: 1px solid #adadad;
		background: #e1e1e1;
	}

	.marker {
		position: absolute;
		inset: 0;
		width: 100%;
		height: 100%;
		fill: none;
		stroke: #ee1111;
		stroke-width: 2;
		pointer-events: none;
	}
</style>
